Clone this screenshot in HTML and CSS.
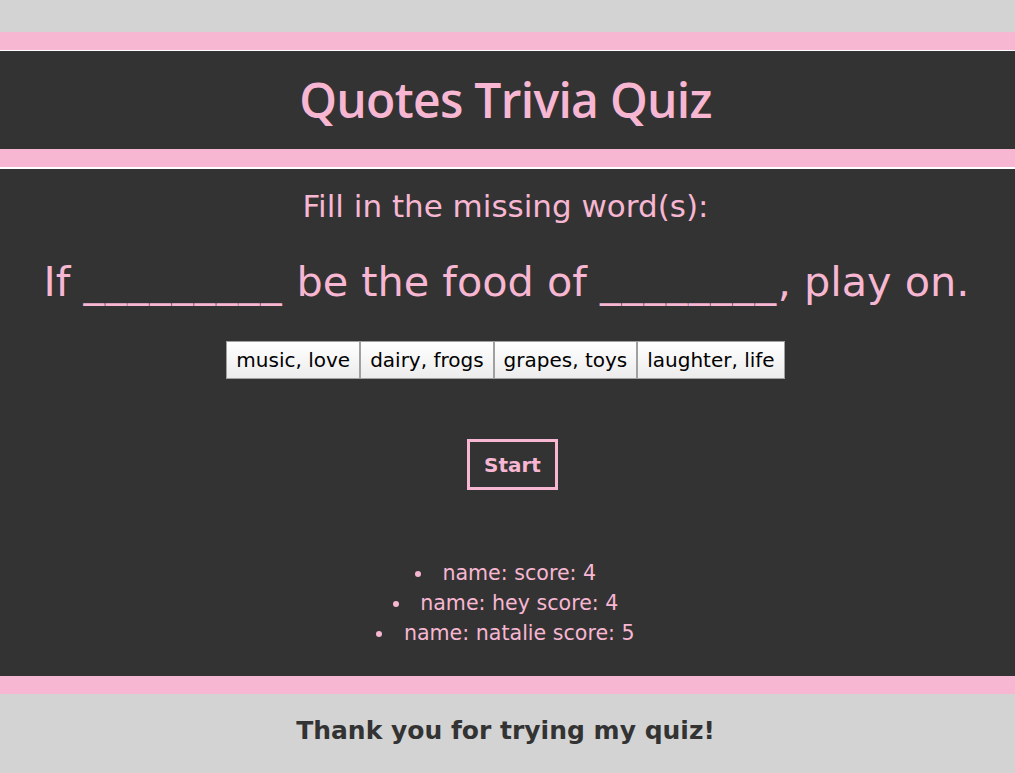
FILE: index.html
```html
<!DOCTYPE html>
<html>
<head>
<meta charset="utf-8">
<title>Quotes Trivia Quiz</title>
<link rel="stylesheet" href="styles.css">
</head>
<body>
<div class="page">
  <header class="header">
    <h1 class="title">Quotes Trivia Quiz</h1>
  </header>
  <main class="main">
    <p class="prompt">Fill in the missing word(s):</p>
    <p class="quote">If <span class="blank">_________</span> be the food of <span class="blank">________</span>, play on.</p>
    <div class="choices">
      <button class="choice">music, love</button><button class="choice">dairy, frogs</button><button class="choice">grapes, toys</button><button class="choice">laughter, life</button>
    </div>
    <button class="start">Start</button>
    <ul class="scores">
      <li>name: score: 4</li>
      <li>name: hey score: 4</li>
      <li>name: natalie score: 5</li>
    </ul>
  </main>
  <footer class="footer">
    <p class="thanks">Thank you for trying my quiz!</p>
  </footer>
</div>
</body>
</html>
```
FILE: styles.css
```css
html, body {
  margin: 0;
  padding: 0;
  background: #d3d3d3;
}
.page {
  padding-top: 32px;
  font-family: "DejaVu Sans", Verdana, sans-serif;
}
.header {
  background: #333333;
  border-top: 18px solid #f7b7d2;
  border-bottom: 18px solid #f7b7d2;
  box-shadow: inset 0 1px 0 #ffffff;
  height: 99px;
  display: flex;
  align-items: center;
  justify-content: center;
}
.title {
  margin: 0 4px 0 0;
  color: #f7b7d2;
  font-family: "Open Sans", sans-serif;
  font-weight: 600;
  font-size: 48px;
  letter-spacing: -0.7px;
}
.main {
  background: #333333;
  border-top: 2px solid #ffffff;
  border-bottom: 18px solid #f7b7d2;
  height: 507px;
  box-sizing: content-box;
  display: flex;
  flex-direction: column;
  align-items: center;
  color: #f7b7d2;
}
.prompt {
  margin: 18px 4px 0 0;
  font-size: 31px;
  line-height: 38px;
}
.quote {
  margin: 31px 2px 0 0;
  font-size: 41.4px;
  line-height: 52px;
  white-space: nowrap;
}
.blank {
  letter-spacing: 1.5px;
}
.choices {
  margin-top: 33px;
  margin-right: 4px;
  display: flex;
}
.choice {
  font-family: "DejaVu Sans", Verdana, sans-serif;
  font-size: 20px;
  color: #000;
  background: linear-gradient(#ffffff, #ececec);
  border: 1px solid #a0a0a0;
  height: 38px;
  padding: 0 9px;
  margin: 0;
}
.start {
  margin-top: 60px;
  margin-left: 10px;
  font-family: "DejaVu Sans", Verdana, sans-serif;
  font-weight: bold;
  font-size: 20px;
  color: #f7b7d2;
  background: transparent;
  border: 3px solid #f7b7d2;
  width: 91px;
  height: 51px;
  padding: 0;
}
.scores {
  margin: 68px 4px 0 0;
  padding: 0;
  list-style: disc inside;
  text-align: center;
  font-size: 20.6px;
  line-height: 30px;
}
.footer {
  height: 78px;
  box-sizing: border-box;
  padding-bottom: 5px;
  display: flex;
  align-items: center;
  justify-content: center;
}
.thanks {
  margin: 0 4px 0 0;
  color: #333333;
  font-family: "DejaVu Sans", Verdana, sans-serif;
  font-weight: 700;
  font-size: 25px;
}
```
